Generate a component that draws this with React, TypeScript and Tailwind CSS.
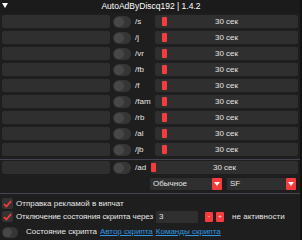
import React from 'react'

const cmds = ['/s', '/j', '/vr', '/fb', '/f', '/fam', '/rb', '/al', '/jb']

function Toggle() {
  return (
    <div className="w-[18px] h-[12px] rounded-full bg-[#363636] flex items-center px-[1px] shrink-0">
      <div className="size-[10px] rounded-full bg-[#474747]" />
    </div>
  )
}

function Slider({ grabLeft }: { grabLeft: number }) {
  return (
    <div className="relative flex-1 h-full bg-[#2f2f2f] rounded-[2px] flex items-center justify-center">
      <div
        className="absolute top-[2px] bottom-[2px] w-[5px] bg-[#f53b3b] rounded-[1px]"
        style={{ left: grabLeft }}
      />
      <span>30 сек</span>
    </div>
  )
}

function Check() {
  return (
    <div className="size-[11px] bg-[#333333] rounded-[2px] flex items-center justify-center shrink-0">
      <svg width="9" height="8" viewBox="0 0 9 8">
        <path d="M1 4.2 L3.4 6.5 L8 1.2" stroke="#f53b3b" strokeWidth="1.8" fill="none" />
      </svg>
    </div>
  )
}

function Arrow() {
  return (
    <div className="w-[10px] h-full bg-[#f53b3b] flex items-center justify-center rounded-[1px]">
      <svg width="6" height="4" viewBox="0 0 6 4">
        <path d="M0 0 H6 L3 4 Z" fill="#fff" />
      </svg>
    </div>
  )
}

export default function App() {
  return (
    <div
      className="w-[302px] h-[240px] bg-[#1e1e1e] text-[#e6e6e6] text-[8px] whitespace-nowrap overflow-hidden flex flex-col border-r-2 border-[#121212]"
      style={{ fontFamily: '"Liberation Sans", Arial, sans-serif' }}
    >
      <div className="h-[13px] relative flex items-center justify-center bg-[#1b1b1b]">
        <svg className="absolute left-[2px] top-[3px]" width="6" height="5" viewBox="0 0 6 5">
          <path d="M0 0 H6 L3 5 Z" fill="#fff" />
        </svg>
        <span className="text-white text-[8.5px] pl-[2px]">AutoAdByDiscq192 | 1.4.2</span>
      </div>
      <div className="flex flex-col gap-[3px] mt-[2px] pr-[2px]">
        {cmds.map((c) => (
          <div key={c} className="h-[13px] flex items-center">
            <div className="ml-[2px] w-[108px] h-full bg-[#2f2f2f] rounded-[2px]" />
            <div className="ml-[3px]">
              <Toggle />
            </div>
            <span className="ml-[4px] w-[20px]">{c}</span>
            <Slider grabLeft={7} />
          </div>
        ))}
      </div>
      <div className="h-px bg-[#45454f] mt-[3px]" />
      <div className="h-[13px] flex items-center mt-[1px] pr-[2px]">
        <div className="ml-[2px] w-[108px] h-full bg-[#2f2f2f] rounded-[2px]" />
        <div className="ml-[3px]">
          <Toggle />
        </div>
        <span className="ml-[4px] w-[16px]">/ad</span>
        <Slider grabLeft={0} />
      </div>
      <div className="h-[12px] flex mt-[4px] pl-[150px] gap-[5px] pr-[4px]">
        <div className="w-[72px] h-full bg-[#2f2f2f] flex items-center justify-between pl-[3px] rounded-[1px]">
          <span>Обычное</span>
          <Arrow />
        </div>
        <div className="flex-1 h-full bg-[#2f2f2f] flex items-center justify-between pl-[3px] rounded-[1px]">
          <span>SF</span>
          <Arrow />
        </div>
      </div>
      <div className="h-px bg-[#45454f] mt-[3px]" />
      <div className="flex flex-col gap-[2px] mt-[4px] pl-[2px]">
        <div className="h-[11px] flex items-center gap-[3px]">
          <Check />
          <span>Отправка рекламой в випчат</span>
        </div>
        <div className="h-[11px] flex items-center">
          <Check />
          <span className="ml-[3px] tracking-[-0.1px]">Отключение состояния скрипта через</span>
          <div className="ml-[3px] w-[42px] h-[12px] bg-[#2f2f2f] rounded-[1px] flex items-center pl-[3px] shrink-0">3</div>
          <div className="ml-[7px] w-[8px] h-[10px] bg-[#f53b3b] rounded-[1px] flex items-center justify-center text-[6px] text-white shrink-0">-</div>
          <div className="ml-[3px] w-[8px] h-[10px] bg-[#f53b3b] rounded-[1px] flex items-center justify-center text-[6px] text-white shrink-0">+</div>
          <span className="ml-[8px]">не активности</span>
        </div>
        <div className="h-[12px] flex items-center mt-[2px]">
          <div className="w-[16px] h-[11px] rounded-full bg-[#363636] flex items-center px-[1px]">
            <div className="size-[9px] rounded-full bg-[#474747]" />
          </div>
          <span className="ml-[8px]">Состояние скрипта</span>
          <span className="ml-[3px] text-[#2f96e0] underline">Автор скрипта</span>
          <span className="ml-[3px] text-[#2f96e0] underline">Команды скрипта</span>
        </div>
      </div>
    </div>
  )
}
